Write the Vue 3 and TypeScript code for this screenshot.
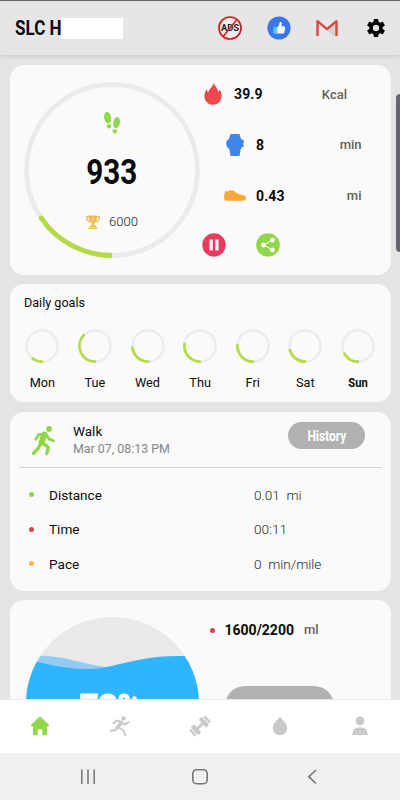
<script setup lang="ts">
interface Day { name: string; sweep: number; today?: boolean }
interface Detail { label: string; value: string; color: string }

const days: Day[] = [
  { name: 'Mon', sweep: 37 },
  { name: 'Tue', sweep: 134 },
  { name: 'Wed', sweep: 84 },
  { name: 'Thu', sweep: 98 },
  { name: 'Fri', sweep: 93 },
  { name: 'Sat', sweep: 75 },
  { name: 'Sun', sweep: 61, today: true },
]

const details: Detail[] = [
  { label: 'Distance', value: '0.01  mi', color: '#92d050' },
  { label: 'Time', value: '00:11', color: '#dd4057' },
  { label: 'Pace', value: '0  min/mile', color: '#f2b843' },
]

/* Arc running clockwise from the bottom of a circle centred on c. */
function arc(c: number, r: number, sweep: number): string {
  const a = (sweep * Math.PI) / 180
  const x = c - r * Math.sin(a)
  const y = c + r * Math.cos(a)
  return `M${c} ${c + r}A${r} ${r} 0 0 1 ${x.toFixed(2)} ${y.toFixed(2)}`
}
</script>

<template>
  <div class="screen">
    <header class="topbar">
      <h1 class="brand"><span class="brand-text">SLC H</span></h1>
      <span class="mask"></span>
      <div class="actions">
        <svg width="24" height="24" viewBox="0 0 24 24">
          <circle cx="12" cy="12" r="11" fill="#f4ecec" stroke="#cf1d1d" stroke-width="1.7" />
          <text x="12" y="15.2" class="ads" text-anchor="middle" textLength="18" lengthAdjust="spacingAndGlyphs">ADS</text>
          <path d="M18.7 3.8 5.3 20.2" stroke="#d3201f" stroke-width="1.5" />
        </svg>
        <svg width="24" height="24" viewBox="0 0 24 24">
          <circle cx="12" cy="12" r="11.6" fill="#3c77ea" />
          <path d="M6.5 11h3.700v6.800H6.500z" fill="#55c7f5" />
          <path d="M10.200 11.200c1.600-1.300 2.200-2.700 2.300-4.500.1-1.100 2-1 2.200.4.2 1.200-.1 2.100-.4 3.100h2.500c1.200 0 1.600.9 1.100 1.700.5.600.4 1.300-.1 1.800.3.700.1 1.300-.4 1.700.2 1-.4 2.200-1.700 2.200h-5.500z" fill="#f5fbff" />
        </svg>
        <svg width="24" height="24" viewBox="0 0 24 24">
          <path d="M3 4h18v16H3z" fill="#e6e7ea" />
          <path d="m12 14 9-7.500V20h-2.500z" fill="#cfd1d3" />
          <path d="M2.500 20V5.200L12 13.200l9.500-8V20" fill="none" stroke="#d9483e" stroke-width="2.400" stroke-linejoin="round" />
        </svg>
        <svg width="24" height="24" viewBox="0 0 24 24">
          <path transform="translate(1.2 1.2) scale(.9)" fill="#050505" d="M19.43 12.98c.04-.32.07-.64.07-.98s-.03-.66-.07-.98l2.11-1.65c.19-.15.24-.42.12-.64l-2-3.46c-.12-.22-.39-.3-.61-.22l-2.49 1c-.52-.4-1.08-.73-1.69-.98l-.38-2.65A.49.49 0 0 0 14 2h-4c-.25 0-.46.18-.49.42l-.38 2.65c-.61.25-1.17.59-1.69.98l-2.49-1c-.23-.09-.49 0-.61.22l-2 3.46c-.13.22-.07.49.12.64l2.11 1.65c-.04.32-.07.65-.07.98s.03.66.07.98l-2.11 1.65c-.19.15-.24.42-.12.64l2 3.46c.12.22.39.3.61.22l2.49-1c.52.4 1.08.73 1.69.98l.38 2.65c.03.24.24.42.49.42h4c.25 0 .46-.18.49-.42l.38-2.65c.61-.25 1.17-.59 1.69-.98l2.49 1c.23.09.49 0 .61-.22l2-3.46c.12-.22.07-.49-.12-.64zM12 15.5a3.5 3.5 0 1 1 0-7 3.5 3.5 0 0 1 0 7z" />
        </svg>
      </div>
    </header>

    <main class="feed">
      <section class="card summary">
        <div class="ring">
          <svg class="ring-art" width="176" height="176" viewBox="0 0 176 176" fill="none" stroke-width="4.800">
            <circle cx="88" cy="88" r="85.500" stroke="#ebebeb" />
            <path :d="arc(88, 85.5, 56)" stroke="#b5da43" />
            <circle cx="17.100" cy="135.800" r="2.400" fill="#b5da43" stroke="none" />
          </svg>
          <div class="ring-body">
            <svg width="18" height="24" viewBox="0 0 18 24" fill="#92d64c">
              <ellipse cx="4.600" cy="6.800" rx="3.500" ry="5.800" transform="rotate(-8 4.600 6.800)" />
              <path d="M3.400 13.900 7.700 13c.7 1.700.6 4.100-.9 4.500-1.800.5-3.200-1.500-3.400-3.600z" />
              <ellipse cx="13.600" cy="11.700" rx="3.300" ry="5.700" transform="rotate(9 13.600 11.700)" />
              <path d="M9.800 18.100 14.200 19c-.2 2.100-1.300 3.900-2.900 3.600-1.600-.4-2-2.700-1.500-4.500z" />
            </svg>
            <strong class="count">933</strong>
            <div class="target">
              <svg width="14" height="14" viewBox="0 0 14 14">
                <path d="M3 1.500H.8C.6 4.500 1.800 6.700 4.300 7M11 1.500h2.200c.2 3-1 5.200-3.500 5.500" fill="none" stroke="#edb94c" stroke-width="1.200" />
                <path d="M2.800.5h8.400c.2 4-.8 6.700-3.200 7.500v2.600h2.200V12H3.800v-1.400H6V8C3.600 7.200 2.600 4.500 2.800.5zM2.500 12.400h9V14h-9z" fill="#edb94c" />
                <path d="m7 2.500.5 1.100 1.200.2-.9.9.2 1.200L7 5.300l-1 .6.2-1.200-.9-.9 1.200-.2z" fill="#fbe0a4" />
              </svg>
              <span>6000</span>
            </div>
          </div>
        </div>
        <div class="stats">
          <div class="stat first">
            <svg width="22" height="24" viewBox="0 0 22 24">
              <path d="M12 1c1 3.600 3.800 5.200 4.200 8.700 1-.4 1.400-1.200 1.500-2.200 1.300 2.100 2 4.300 1.900 6.800-.3 5-4 8.500-8.600 8.500-4.700 0-8.400-3.700-8.600-8.300-.1-3 1-5.500 2.600-7.600.1 1.600.5 2.700 1.400 3.500C6.900 6.700 10.500 5.200 12 1z" fill="#ee484c" />
            </svg>
            <b>39.9</b><span class="unit">Kcal</span>
          </div>
          <div class="stat">
            <svg width="22" height="24" viewBox="0 0 22 24" fill="#4285e8">
              <path d="M6.500 1h9l1.400 4.500c.7.400 1.200.9 1.600 1.500h1.400v3h-.5c0 .8-.1 1.500-.3 2.100h.9v1.500h-1.500c-.4 1-1 1.800-1.800 2.500L15.500 23h-9L5.400 16.100C1.200 13.500 1.300 7.800 5.100 5.500z" />
            </svg>
            <b>8</b><span class="unit">min</span>
          </div>
          <div class="stat">
            <svg width="22" height="24" viewBox="0 0 22 24">
              <path d="M1.200 6.800C2.500 8 4.700 7.700 5.200 6.400c1-.6 1.700.2 2.100.2.700-.1 1.200-.4 2-.2 1.900 1.200 3.700 3.400 6.600 4.200 2.200.6 6 .5 6.100 3.200 0 2-.9 2.900-2.600 2.900H2.500C.6 16.700.1 15.500.1 13.500c0-2.400.6-4.500 1.100-6.700z" fill="#f8a832" />
            </svg>
            <b>0.43</b><span class="unit">mi</span>
          </div>
          <div class="controls">
            <svg width="24" height="24" viewBox="0 0 24 24">
              <circle cx="12" cy="12" r="11.700" fill="#e93a60" />
              <path d="M7.500 6.500h3.300v11H7.500zM13.300 6.500h3.300v11h-3.300z" fill="#fff3f5" />
            </svg>
            <svg width="24" height="24" viewBox="0 0 24 24">
              <circle cx="12" cy="12" r="11.800" fill="#92d64c" />
              <path d="M16.300 7.200 7.800 12l8.500 4.800" fill="none" stroke="#fff" stroke-width="1" />
              <g fill="#fff"><circle cx="16.400" cy="7.100" r="2.400" /><circle cx="7.500" cy="12" r="2.400" /><circle cx="16.400" cy="16.900" r="2.400" /></g>
            </svg>
          </div>
        </div>
      </section>

      <section class="card goals">
        <h2>Daily goals</h2>
        <div class="week">
          <div v-for="d in days" :key="d.name" class="day">
            <svg width="34" height="34" viewBox="0 0 34 34" fill="none">
              <circle cx="17" cy="17" r="15.600" stroke="#ececec" stroke-width="2.500" />
              <path :d="arc(17, 15.6, d.sweep)" stroke="#b5da43" stroke-width="2.700" stroke-linecap="round" />
            </svg>
            <span :class="{ today: d.today }">{{ d.name }}</span>
          </div>
        </div>
      </section>

      <section class="card walk">
        <div class="walk-head">
          <svg width="26" height="32" viewBox="0 0 26 32" fill="none" stroke="#92d64c" stroke-linecap="round" stroke-linejoin="round">
            <circle cx="18.100" cy="4" r="2.900" fill="#92d64c" stroke="none" />
            <path d="M13.300 9.500 10.600 17.500" stroke-width="6" />
            <path d="M14 8.800 7.600 9.600 4.900 14.300M15.300 9.800l2.900 4.300 4.300 1.700" stroke-width="2.800" />
            <path d="m10 18-2.600 5L2.500 28.300M11.600 17.700l5.700 4.700L15.800 28.500" stroke-width="3.400" />
          </svg>
          <div class="walk-title">
            <span class="name">Walk</span>
            <span class="date">Mar 07, 08:13 PM</span>
          </div>
          <button class="history"><span>History</span></button>
        </div>
        <dl class="details">
          <div v-for="r in details" :key="r.label" class="detail">
            <i class="dot" :style="{ background: r.color }"></i>
            <dt>{{ r.label }}</dt>
            <dd>{{ r.value }}</dd>
          </div>
        </dl>
      </section>

      <section class="card water">
        <svg class="gauge" width="173" height="173" viewBox="0 0 174 174">
          <defs><clipPath id="bowl"><circle cx="87" cy="87" r="87" /></clipPath></defs>
          <g clip-path="url(#bowl)">
            <path d="M0 0h174v174H0z" fill="#e9e9e9" />
            <path d="M0 40C30 36 50 46 80 50.500L110 60H0z" fill="#91cdf3" />
            <path d="M0 43C28 48 52 57 85 49.500C112 43 134 37 174 40V174H0z" fill="#2fb5fd" />
          </g>
          <text x="85" y="101.500" class="percent" text-anchor="middle" textLength="62" lengthAdjust="spacingAndGlyphs">73%</text>
        </svg>
        <div class="intake">
          <div class="amount"><i class="dot red"></i><b>1600/2200</b><span>ml</span></div>
          <button class="drink" aria-label="Drink"></button>
        </div>
      </section>
    </main>

    <nav class="tabs">
      <svg width="24" height="24" viewBox="0 0 24 24" fill="#92d64c"><path d="M12 2.700a1 1 0 0 1 .9.300l8 7.700c.6.700.2 1.700-.7 1.700H19v7.500c0 .8-.5 1.300-1.300 1.300h-3.400v-5.700h-4.600v5.700H6.300c-.8 0-1.300-.5-1.300-1.300v-7.500H3.800c-.9 0-1.300-1-.7-1.700l8-7.700z" /></svg>
      <svg width="24" height="24" viewBox="0 0 24 24" fill="none" stroke="#c9c9c9" stroke-width="2" stroke-linecap="round" stroke-linejoin="round">
        <circle cx="15.500" cy="4.400" r="2.200" fill="#c9c9c9" stroke="none" />
        <path d="M13.300 8.500 9.500 13.600" stroke-width="3.600" />
        <path d="m12.800 7.800-4-1.300-3.300 2.600M14.400 9l2.200 1.500 4.200-2.300M8.900 14.300 7.500 16.200 3 16.700M10.800 13.500l4.500 3 2 4.500" />
      </svg>
      <svg width="24" height="24" viewBox="0 0 24 24" fill="#c9c9c9">
        <g transform="rotate(-43 12 12)"><rect x="7" y="10.500" width="10" height="3" /><rect x="4.200" y="6.500" width="4.600" height="11" rx="1.400" /><rect x="1" y="7.700" width="2.500" height="8.600" rx="1" /><rect x="15.200" y="6.500" width="4.600" height="11" rx="1.400" /><rect x="20.500" y="7.700" width="2.500" height="8.600" rx="1" /></g>
      </svg>
      <svg width="24" height="24" viewBox="0 0 24 24" fill="#c9c9c9"><path d="M12 2.500c3 4 7.200 7.200 7.200 11.700 0 4-3.200 6.900-7.200 6.900s-7.200-2.900-7.200-6.900C4.800 9.700 9 6.500 12 2.500z" /></svg>
      <svg width="24" height="24" viewBox="0 0 24 24" fill="#c9c9c9"><circle cx="12" cy="6.900" r="4.300" /><path d="M4.300 21c.1-5 3-7.700 7.700-7.700s7.600 2.700 7.700 7.700z" /></svg>
    </nav>

    <footer class="system">
      <svg width="24" height="24" viewBox="0 0 24 24" stroke="#757575" stroke-width="1.500"><path d="M5.800 4.500v14.500M12 4.500v14.500M18.200 4.500v14.500" /></svg>
      <svg width="24" height="24" viewBox="0 0 24 24" fill="none" stroke="#757575" stroke-width="1.600"><rect x="4.800" y="4.700" width="14.400" height="14" rx="4" /></svg>
      <svg width="24" height="24" viewBox="0 0 24 24" fill="none" stroke="#757575" stroke-width="1.600"><path d="m16 5-7.200 6.700 7.200 6.800" /></svg>
    </footer>

    <span class="edge-handle"></span>
  </div>
</template>

<style>
body { margin: 0; overflow: hidden; }
</style>

<style scoped>
.screen { position: relative; width: 400px; height: 800px; display: flex; flex-direction: column; overflow: hidden; background: #e4e4e4; color: #0b0b0b; font-family: Roboto, "Liberation Sans", sans-serif; }
svg { display: block; flex: none; overflow: visible; }
h1, h2, dl, dd, dt { margin: 0; font-weight: 400; }
button { border: 0; padding: 0; background: #b1b1b1; font-family: inherit; }
.topbar { box-sizing: border-box; height: 55px; flex: none; display: flex; align-items: center; padding: 0 12.500px 0 15px; border-top: 1px solid #68656a; background: #e6e6e6; box-shadow: 0 1px 5px rgba(0, 0, 0, .13); }
.brand { width: 46px; font-size: 20px; line-height: 24px; white-space: nowrap; }
.brand-text { display: inline-block; font-weight: 700; transform: scaleX(.85); transform-origin: left; }
.mask { width: 62px; height: 21px; background: #fff; }
.actions { flex: 1; display: flex; justify-content: flex-end; gap: 24.500px; }
.ads { font: 700 9px Roboto, sans-serif; fill: #222; }
.feed { height: 643.500px; flex: none; box-sizing: border-box; padding: 10px 9.500px 0 10px; display: flex; flex-direction: column; gap: 9.500px; overflow: hidden; }
.card { flex: none; box-sizing: border-box; border-radius: 14px; background: #fafafa; }
.summary { height: 209.500px; display: flex; padding: 16.500px 0 0 14px; }
.ring { width: 176px; height: 176px; display: grid; }
.ring-art, .ring-body { grid-area: 1 / 1; }
.ring-body { display: flex; flex-direction: column; align-items: center; padding-top: 29px; }
.count { margin-top: 17px; font-size: 34.500px; line-height: 40px; transform: scaleX(.86); }
.target { display: flex; align-items: center; gap: 9px; margin-top: 22px; font-size: 13px; line-height: 16px; font-weight: 300; color: #222; }
.stats { flex: 1; }
.stat { height: 51px; display: flex; align-items: center; padding: 0 29px 0 24px; font-size: 14px; }
.stat.first { height: 50px; margin-top: -12.500px; padding: 0 43.500px 0 2px; }
.stat b { margin-left: 10px; letter-spacing: .1px; }
.unit { margin-left: auto; font-size: 13px; font-weight: 500; color: #606060; }
.controls { display: flex; gap: 30px; margin-top: 11.500px; padding-left: 2px; }
.goals { height: 118px; padding: 10px 10px 0 14px; }
h2 { font-size: 12.600px; line-height: 18px; }
.week { display: flex; justify-content: space-between; margin: 17px 5.500px 0 1.300px; }
.day { width: 34px; display: flex; flex-direction: column; align-items: center; font-size: 12.700px; line-height: 16px; gap: 12px; }
.today { font-weight: 700; transform: scaleX(.88); }
.walk { height: 179px; padding: 0 9px; }
.walk-head { height: 56px; box-sizing: border-box; display: flex; align-items: flex-start; border-bottom: 1px solid #d2d2d2; padding: 10.500px 16.500px 0 12px; }
.walk-head svg { margin-top: 3px; }
.walk-title { display: flex; flex-direction: column; margin: 1px 0 0 16px; }
.name { font-size: 13.500px; line-height: 17px; }
.date { font-size: 12.400px; line-height: 18px; color: #858585; }
.history { width: 77px; height: 27px; margin-left: auto; border-radius: 14px; color: #fff; font-size: 14px; font-weight: 700; }
.history span { display: inline-block; transform: scaleX(.85); }
.details { padding: 10px 9px 0 10px; }
.detail { height: 34.500px; display: flex; align-items: center; font-size: 13.600px; }
.dot { width: 5px; height: 5px; flex: none; border-radius: 50%; }
.detail dt { width: 205px; margin-left: 15px; }
.detail dd { color: #262626; font-weight: 300; white-space: pre; }
.water { height: 210px; display: flex; padding: 17px 0 0 15.500px; }
.percent { font: 900 33px Roboto, sans-serif; fill: #fff; stroke: #fff; stroke-width: .8px; }
.intake { padding: 4px 0 0 11px; }
.amount { display: flex; align-items: center; font-size: 14px; line-height: 18px; }
.amount b { margin: 0 10px 0 10px; }
.amount span { color: #606060; font-weight: 500; font-size: 13px; }
.red { background: #dd4057; }
.drink { display: block; width: 109px; height: 40px; margin: 47px 0 0 15px; border-radius: 20px; }
.tabs { height: 53.500px; flex: none; display: flex; align-items: center; justify-content: space-between; padding: 0 28px; border-top: 1px solid #e8e8e8; background: #fff; }
.system { flex: 1; display: flex; align-items: center; justify-content: space-between; padding: 0 76px; background: #f0f0f0; }
.edge-handle { position: absolute; left: 396px; top: 94px; width: 8px; height: 158px; border-radius: 4px; background: #66646c; }
</style>
